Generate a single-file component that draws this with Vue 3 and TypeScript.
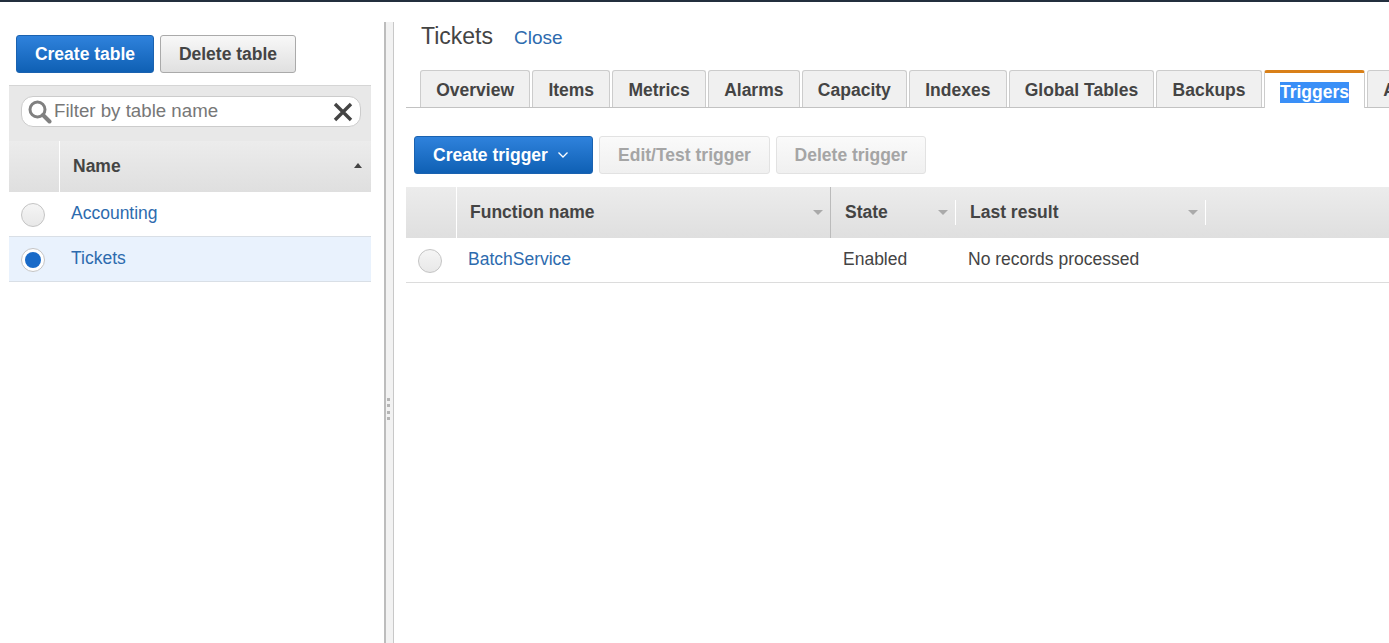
<template>
  <div class="console">
    <aside class="left-pane">
      <div class="table-actions">
        <button class="btn primary">Create table</button>
        <button class="btn">Delete table</button>
      </div>
      <div class="filter-bar">
        <div class="filter-box">
          <svg class="search-icon" width="24" height="24" viewBox="0 0 24 24">
            <circle cx="9.500" cy="9.500" r="7.500" fill="none" stroke="#808080" stroke-width="3" />
            <path d="M15 15l6.500 6.500" stroke="#808080" stroke-width="4" stroke-linecap="round" />
          </svg>
          <span class="filter-text">Filter by table name</span>
          <svg class="clear-icon" width="20" height="20" viewBox="0 0 20 20">
            <path d="M2 2l16 16M18 2L2 18" stroke="#444" stroke-width="3.400" />
          </svg>
        </div>
      </div>
      <div class="grid-head left-head">
        <div class="radio-col"></div>
        <div class="head-cell name-cell">
          <span>Name</span>
          <span class="sort-up"></span>
        </div>
      </div>
      <div
        v-for="t in tables"
        :key="t.name"
        class="table-row"
        :class="{ selected: t.selected }"
      >
        <div class="radio-slot">
          <span class="radio" :class="{ on: t.selected }"></span>
        </div>
        <a class="link">{{ t.name }}</a>
      </div>
    </aside>

    <div class="splitter">
      <span v-for="n in 4" :key="n" class="grip"></span>
    </div>

    <main class="right-pane">
      <div class="title-row">
        <span class="title">Tickets</span>
        <a class="link close">Close</a>
      </div>
      <div class="tabs">
        <div
          v-for="tab in tabs"
          :key="tab"
          class="tab"
          :class="{ active: tab === 'Triggers' }"
        >
          <span :class="{ picked: tab === 'Triggers' }">{{ tab }}</span>
        </div>
      </div>
      <div class="trigger-actions">
        <button class="btn primary create-trigger">
          Create trigger
          <svg width="12" height="8" viewBox="0 0 12 8">
            <path d="M1.500 1.500L6 6l4.500-4.500" fill="none" stroke="#fff" stroke-width="1.300" />
          </svg>
        </button>
        <button class="btn disabled edit">Edit/Test trigger</button>
        <button class="btn disabled del">Delete trigger</button>
      </div>
      <div class="grid-head trigger-head">
        <div class="trigger-radio-col"></div>
        <div
          v-for="col in columns"
          :key="col.label"
          class="head-cell trigger-cell"
          :class="col.cls"
        >
          <span>{{ col.label }}</span>
          <span class="sort-down"></span>
        </div>
      </div>
      <div class="trigger-row">
        <div class="trigger-radio"><span class="radio"></span></div>
        <a class="link fn-name">BatchService</a>
        <span class="state">Enabled</span>
        <span class="result">No records processed</span>
      </div>
    </main>
  </div>
</template>

<script setup lang="ts">
const tables = [
  { name: 'Accounting', selected: false },
  { name: 'Tickets', selected: true },
]

const tabs = [
  'Overview',
  'Items',
  'Metrics',
  'Alarms',
  'Capacity',
  'Indexes',
  'Global Tables',
  'Backups',
  'Triggers',
  'Access control',
]

const columns = [
  { label: 'Function name', cls: 'col-fn' },
  { label: 'State', cls: 'col-state' },
  { label: 'Last result', cls: 'col-result' },
]
</script>

<style>
html,
body {
  margin: 0;
  overflow: hidden;
}
</style>

<style scoped>
.console {
  display: flex;
  width: 1389px;
  height: 643px;
  box-sizing: border-box;
  border-top: 2px solid #232f3e;
  font-family: 'Liberation Sans', Arial, sans-serif;
  font-size: 17.500px;
  color: #444;
  background: #fff;
  overflow: hidden;
}

.left-pane {
  width: 384px;
  flex-shrink: 0;
  padding: 33px 13px 0 9px;
  box-sizing: border-box;
}

.table-actions {
  display: flex;
  gap: 6px;
  padding-left: 7px;
  margin-bottom: 12px;
}

.btn {
  height: 38px;
  padding: 0;
  border: 1px solid #aaa;
  border-radius: 3px;
  background: linear-gradient(#f8f8f8, #e0e0e0);
  font-family: inherit;
  font-size: 17.500px;
  font-weight: 700;
  color: #444;
  width: 136px;
}

.btn.primary {
  width: 138px;
  border-color: #1a62b0;
  background: linear-gradient(#2f82dc, #0f60b4);
  color: #fff;
}

.filter-bar {
  height: 56px;
  box-sizing: border-box;
  padding: 10px 10px 0 12px;
  background: #e8e8e8;
  border-top: 1px solid #d5d5d5;
}

.filter-box {
  display: flex;
  align-items: center;
  height: 31px;
  box-sizing: border-box;
  border: 1px solid #ccc;
  border-radius: 12px;
  background: #fff;
  padding: 0 7px 0 6px;
}

.search-icon {
  flex-shrink: 0;
}

.clear-icon {
  flex-shrink: 0;
}

.filter-text {
  flex: 1;
  margin-left: 2px;
  padding-bottom: 2px;
  color: #777;
  font-size: 18.700px;
}

.grid-head {
  display: flex;
  background: linear-gradient(#ececec, #dfdfdf);
}

.left-head {
  height: 51px;
}

.radio-col {
  width: 50px;
  border-right: 1px solid #fff;
}

.head-cell {
  display: flex;
  align-items: center;
  justify-content: space-between;
  font-weight: 700;
  color: #444;
  box-sizing: border-box;
}

.name-cell {
  flex: 1;
  padding: 0 9px 0 13px;
}

.sort-up {
  width: 0;
  height: 0;
  margin-bottom: 3px;
  border: 4.500px solid transparent;
  border-top: 0;
  border-bottom: 5px solid #444;
}

.sort-down {
  width: 0;
  height: 0;
  border: 5px solid transparent;
  border-bottom: 0;
  border-top: 5px solid #aaa;
}

.table-row {
  display: flex;
  align-items: center;
  height: 45px;
  box-sizing: border-box;
  border-bottom: 1px solid #d9dfe6;
}

.table-row.selected {
  background: #e9f2fd;
}

.radio-slot {
  width: 51px;
  display: flex;
  padding-left: 12px;
  padding-top: 1px;
  box-sizing: border-box;
}

.radio {
  display: block;
  position: relative;
  width: 24px;
  height: 24px;
  box-sizing: border-box;
  border: 1px solid #c4c4c4;
  border-radius: 50%;
  background: linear-gradient(#f5f5f5, #e8e8e8);
}

.radio.on {
  background: #fff;
}

.radio.on::after {
  content: '';
  position: absolute;
  left: 3px;
  top: 3px;
  width: 16px;
  height: 16px;
  border-radius: 50%;
  background: #1a6bc8;
}

.link {
  color: #2d6bae;
  font-size: 17.500px;
}

.table-row .link {
  margin-left: 11px;
  margin-top: -2px;
}

.splitter {
  width: 10px;
  flex-shrink: 0;
  margin-top: 20px;
  box-sizing: border-box;
  border-left: 2px solid #bdbdbd;
  border-right: 1px solid #c8c8c8;
  background: #f2f2f2;
  display: flex;
  flex-direction: column;
  align-items: center;
  justify-content: center;
  gap: 3.500px;
  padding-top: 153px;
  padding-right: 2px;
}

.grip {
  width: 3px;
  height: 3px;
  background: #b5b5b5;
}

.right-pane {
  flex: 1;
  min-width: 0;
  padding: 0 0 0 12px;
  overflow: hidden;
}

.title-row {
  display: flex;
  align-items: baseline;
  height: 68px;
  padding: 21px 0 0 15px;
  box-sizing: border-box;
}

.title {
  font-size: 23px;
  color: #444;
}

.close {
  margin-left: 21px;
  font-size: 19px;
}

.tabs {
  display: flex;
  gap: 2px;
  padding-left: 14px;
  height: 38px;
  box-sizing: border-box;
  border-bottom: 1px solid #c2c2c2;
  white-space: nowrap;
  width: 1100px;
}

.tab {
  flex-shrink: 0;
  display: flex;
  align-items: center;
  height: 37px;
  box-sizing: border-box;
  padding: 2px 15.200px 0;
  border: 1px solid #ccc;
  border-bottom: 0;
  border-radius: 3px 3px 0 0;
  background: #f0f0f0;
  font-weight: 700;
  color: #444;
}

.tab.active {
  position: relative;
  height: 38px;
  border-top: 3px solid #d98018;
  background: #fff;
  padding-top: 3px;
}

.picked {
  background: #3a8ff7;
  color: #fff;
}

.trigger-actions {
  display: flex;
  gap: 6px;
  padding: 28px 0 13px 8px;
}

.create-trigger.primary {
  width: 179px;
  display: flex;
  align-items: center;
  justify-content: center;
  gap: 9px;
  padding-right: 5px;
}

.btn.disabled {
  border-color: #e2e2e2;
  background: linear-gradient(#fafafa, #f0f0f0);
  color: #a5a5a5;
}

.edit {
  width: 171px;
}

.del {
  width: 150px;
}

.trigger-head {
  height: 51px;
}

.trigger-radio-col {
  width: 50px;
  border-right: 1px solid #fff;
}

.trigger-cell {
  padding: 0 7px 0 15px;
  position: relative;
}

.trigger-cell::after {
  content: '';
  position: absolute;
  right: -1px;
  top: 13px;
  bottom: 13px;
  width: 1px;
  background: #fff;
}

.col-fn {
  width: 373px;
  padding-left: 13px;
}

.col-fn::after {
  top: 0;
  bottom: 0;
  background: #bbb;
}

.col-state {
  width: 125px;
}

.col-result {
  width: 250px;
}

.trigger-row {
  display: flex;
  align-items: center;
  height: 45px;
  box-sizing: border-box;
  border-bottom: 1px solid #dcdcdc;
}

.trigger-radio {
  width: 62px;
  padding-left: 12px;
  padding-top: 1px;
  box-sizing: border-box;
}

.fn-name {
  width: 375px;
  margin-bottom: 2px;
}

.state {
  width: 125px;
  margin-bottom: 2px;
}

.result {
  margin-bottom: 2px;
}
</style>
